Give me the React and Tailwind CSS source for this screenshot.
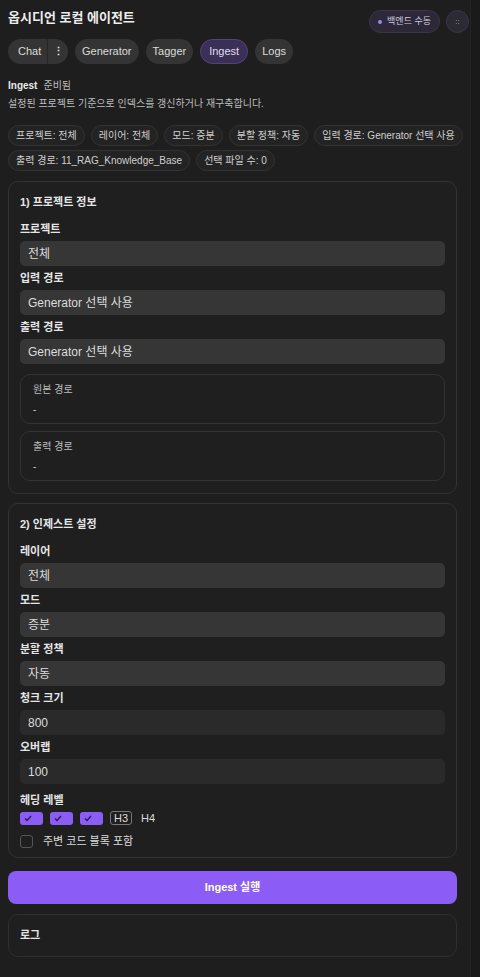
import React from "react";

const font = { fontFamily: '"Liberation Sans", "Noto Sans CJK KR", sans-serif' };

function Chip({ children }) {
  return (
    <span className="h-[21px] px-[7px] flex items-center rounded-full border border-[#333] bg-[#232323] text-[10px] text-[#cfcfcf] whitespace-nowrap">
      {children}
    </span>
  );
}

function Field({ label, value, dark }) {
  return (
    <div className="flex flex-col">
      <div className="text-[11px] font-bold text-[#e6e6e6] h-[24px] flex items-center">{label}</div>
      <div
        className={`h-[25px] rounded-[5px] px-[8px] flex items-center text-[12px] text-[#dcdcdc] ${
          dark ? "bg-[#2a2a2a]" : "bg-[#363636]"
        }`}
      >
        {value}
      </div>
    </div>
  );
}

function SubCard({ label }) {
  return (
    <div className="h-[50px] rounded-[10px] border border-[#333] bg-[#1f1f1f] px-[12px] pt-[8px] flex flex-col gap-[6px]">
      <div className="text-[10px] text-[#bdbdbd] leading-[14px]">{label}</div>
      <div className="text-[10px] text-[#cfcfcf] leading-[14px]">-</div>
    </div>
  );
}

function Check() {
  return (
    <span className="w-[23px] h-[13px] rounded-[3px] bg-[#8b5cf6] flex items-center pl-[4px]">
      <svg width="8" height="7" viewBox="0 0 8 7">
        <path d="M1 3.5 L3 5.5 L7 1" fill="none" stroke="#2a1a4a" strokeWidth="1.3" />
      </svg>
    </span>
  );
}

export default function App() {
  return (
    <div className="w-[480px] min-h-[977px] bg-[#1e1e1e] flex" style={font}>
      <div className="w-[470px] pl-[8px] pr-px flex flex-col">
        {/* Header */}
        <div className="flex items-start justify-between pt-[9px]">
          <div className="text-[13px] font-bold text-[#ededed] leading-[18px]">옵시디언 로컬 에이전트</div>
          <div className="flex items-center gap-[6px] pt-[1px]">
            <span className="h-[23px] px-[8px] rounded-full bg-[#2c2838] border border-[#3a3548] flex items-center gap-[5px] text-[9px] text-[#d0cce0]">
              <span className="w-[4px] h-[4px] rounded-full bg-[#9f85f0]" />
              백엔드 수동
            </span>
            <span className="w-[23px] h-[23px] rounded-full bg-[#2c2a33] border border-[#3a3744] flex items-center justify-center text-[8px] text-[#aaa] leading-none">
              ::
            </span>
          </div>
        </div>
        {/* Tabs */}
        <div className="flex items-center gap-[7px] mt-[6px]">
          <div className="h-[25px] w-[60px] rounded-full bg-[#343434] flex items-center text-[11px] text-[#dcdcdc]">
            <span className="pl-[10px] w-[39px]">Chat</span>
            <span className="h-full border-l border-[#262626] flex-1 flex items-center justify-center text-[11px] font-bold">⋮</span>
          </div>
          <span className="h-[25px] px-[7px] rounded-full bg-[#343434] flex items-center text-[11px] text-[#dcdcdc]">Generator</span>
          <span className="h-[25px] px-[7px] rounded-full bg-[#343434] flex items-center text-[11px] text-[#dcdcdc]">Tagger</span>
          <span className="h-[25px] px-[8px] rounded-full bg-[#3a2f55] border border-[#54427f] flex items-center text-[11px] text-[#e0dcf0]">Ingest</span>
          <span className="h-[25px] px-[7px] rounded-full bg-[#343434] flex items-center text-[11px] text-[#dcdcdc]">Logs</span>
        </div>
        {/* Status */}
        <div className="mt-[15px] flex items-center gap-[6px] text-[10px] leading-[14px]">
          <span className="font-bold text-[#eaeaea]">Ingest</span>
          <span className="text-[#bdbdbd]">준비됨</span>
        </div>
        <div className="mt-[4px] text-[10px] text-[#bdbdbd] leading-[14px]">
          설정된 프로젝트 기준으로 인덱스를 갱신하거나 재구축합니다.
        </div>
        {/* Chips */}
        <div className="mr-[4px] mt-[14px] flex flex-wrap gap-x-[6px] gap-y-[4px]">
          <Chip>프로젝트: 전체</Chip>
          <Chip>레이어: 전체</Chip>
          <Chip>모드: 증분</Chip>
          <Chip>분할 정책: 자동</Chip>
          <Chip>입력 경로: Generator 선택 사용</Chip>
          <Chip>출력 경로: 11_RAG_Knowledge_Base</Chip>
          <Chip>선택 파일 수: 0</Chip>
        </div>
        {/* Card 1 */}
        <div className="mr-[12px] mt-[10px] rounded-[10px] border border-[#333] bg-[#1f1f1f] px-[11px] pt-[11px] pb-[12px] flex flex-col">
          <div className="text-[11px] font-bold text-[#e6e6e6] h-[18px] flex items-center">1) 프로젝트 정보</div>
          <div className="mt-[6px] flex flex-col">
            <Field label="프로젝트" value="전체" />
            <Field label="입력 경로" value="Generator 선택 사용" />
            <Field label="출력 경로" value="Generator 선택 사용" />
          </div>
          <div className="mt-[10px] flex flex-col gap-[7px]">
            <SubCard label="원본 경로" />
            <SubCard label="출력 경로" />
          </div>
        </div>
        {/* Card 2 */}
        <div className="mr-[12px] mt-[9px] rounded-[10px] border border-[#333] bg-[#1f1f1f] px-[11px] pt-[11px] pb-[7px] flex flex-col">
          <div className="text-[11px] font-bold text-[#e6e6e6] h-[18px] flex items-center">2) 인제스트 설정</div>
          <div className="mt-[6px] flex flex-col">
            <Field label="레이어" value="전체" />
            <Field label="모드" value="증분" />
            <Field label="분할 정책" value="자동" />
            <Field label="청크 크기" value="800" dark />
            <Field label="오버랩" value="100" dark />
          </div>
          <div className="text-[11px] font-bold text-[#e6e6e6] h-[20px] flex items-center mt-[6px]">헤딩 레벨</div>
          <div className="flex items-center gap-[7px] text-[11px] text-[#dcdcdc]">
            <Check />
            <Check />
            <Check />
            <span className="h-[14px] px-[3px] border border-[#777] rounded-[3px] flex items-center leading-none">H3</span>
            <span className="ml-[2px]">H4</span>
          </div>
          <div className="mt-[7px] flex items-center gap-[10px] h-[16px]">
            <span className="w-[13px] h-[13px] rounded-[3px] border border-[#555] bg-[#1f1f1f]" />
            <span className="text-[11px] text-[#dcdcdc]">주변 코드 블록 포함</span>
          </div>
        </div>
        {/* Run button */}
        <div className="mr-[12px] mt-[13px] h-[33px] rounded-[8px] bg-[#8b5cf6] flex items-center justify-center text-[11px] font-bold text-white">
          Ingest 실행
        </div>
        {/* Log */}
        <div className="mr-[12px] mt-[10px] h-[43px] rounded-[10px] border border-[#2f2f2f] bg-[#1f1f1f] px-[11px] flex items-center text-[11px] font-bold text-[#e6e6e6]">
          로그
        </div>
      </div>
      <div className="w-[10px] bg-[#1a1a1a] border-l border-[#232323]" />
    </div>
  );
}
